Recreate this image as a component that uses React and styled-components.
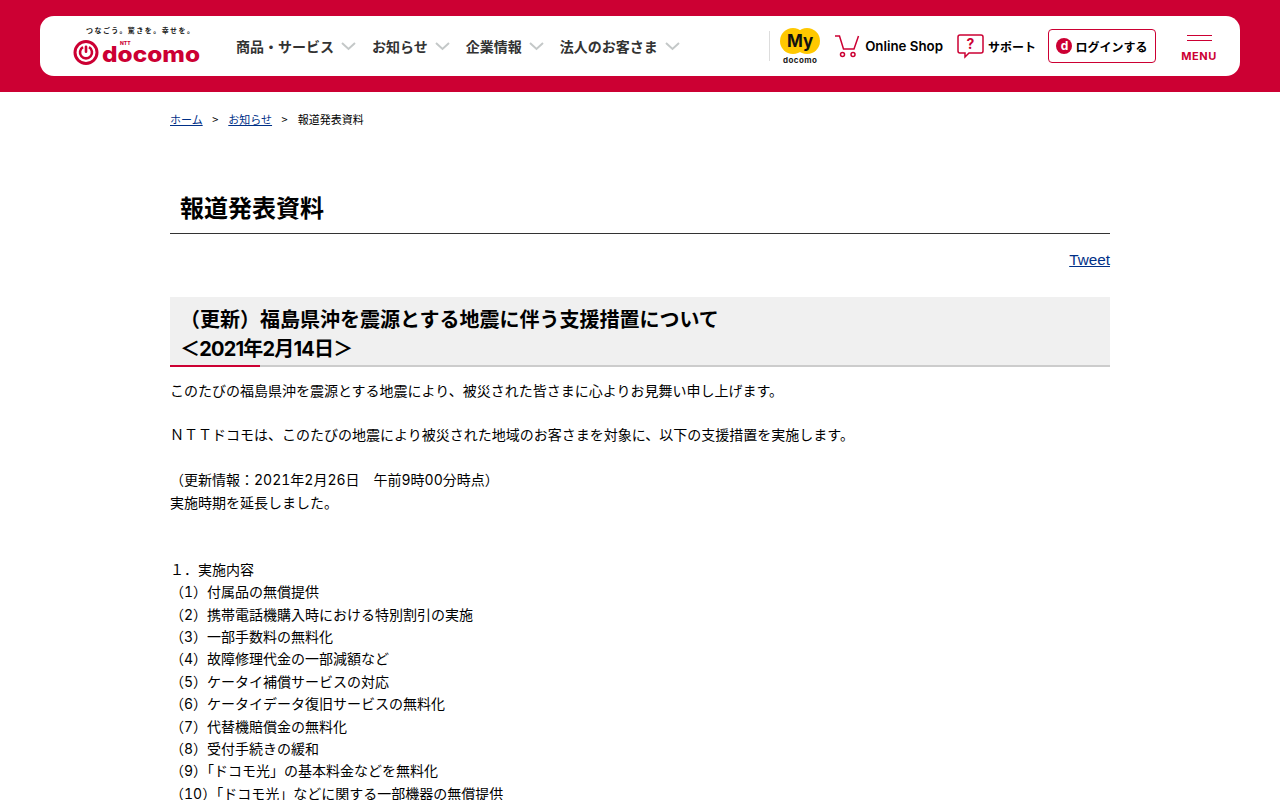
import React from "react";
import styled, { createGlobalStyle } from "styled-components";

const Global = createGlobalStyle`
  html, body { margin: 0; padding: 0; background: #fff; }
  body { font-family: "Noto Sans CJK JP", "Noto Sans", sans-serif; color: #000; overflow: hidden; height: 800px; }
`;
const Header = styled.header`
  background: #cc0033; height: 92px; padding: 16px 40px; box-sizing: border-box;
`;
const Bar = styled.div`
  background: #fff; border-radius: 14px; height: 60px; display: flex; align-items: center; position: relative;
`;
const LogoWrap = styled.a`
  display: flex; flex-direction: column; align-items: flex-start; width: 128px; margin: 0 0 1.500px 33px; flex: none;
`;
const Tagline = styled.span`
  font-size: 7px; font-weight: 700; letter-spacing: 1.450px; line-height: 9px; color: #222; white-space: nowrap; margin: 0 0 5.500px 13px;
`;
const Nav = styled.nav`
  display: flex; margin-left: 35px; gap: 16px; align-items: center;
`;
const NavItem = styled.a`
  display: flex; align-items: center; gap: 7px; font-size: 14px; font-weight: 700; color: #333; white-space: nowrap;
`;
const Right = styled.div`
  margin-left: auto; display: flex; align-items: center;
`;
const Divider = styled.span`
  width: 1px; height: 30px; background: #ddd; margin-right: 10px;
`;
const MyWrap = styled.a`
  display: flex; flex-direction: column; align-items: center; width: 40px; margin-right: 14px;
`;
const MyCaption = styled.span`
  font-size: 8px; font-weight: 700; line-height: 9px; color: #222; margin-top: 2px; letter-spacing: 0.4px; font-family: "Inter", sans-serif;
`;
const IconLink = styled.a`
  display: flex; align-items: center; gap: ${p => p.$gap}px; font-size: ${p => p.$size}px; font-weight: ${p => p.$weight}; color: #000; white-space: nowrap; margin-right: ${p => p.$mr}px;
  font-family: "Inter", "Noto Sans CJK JP", sans-serif;
`;
const Login = styled.a`
  display: flex; align-items: center; justify-content: center; gap: 3px; width: 108px; height: 34px; box-sizing: border-box;
  border: 1px solid #cc0033; border-radius: 4px; font-size: 12px; font-weight: 700; color: #000; white-space: nowrap;
`;
const DMark = styled.span`
  width: 16px; height: 16px; border-radius: 50%; background: #cc0033; color: #fff; font: 700 12px/15px "Inter", sans-serif; text-align: center; flex: none;
`;
const Menu = styled.a`
  width: 36px; margin: 4px 23px 0 25px; display: flex; flex-direction: column; align-items: center;
`;
const MenuLine = styled.span`
  width: 25px; height: 1px; background: #cc0033; margin-bottom: 4px;
`;
const MenuLabel = styled.span`
  font: 700 11px/12px "Inter", sans-serif; letter-spacing: 0.5px; color: #cc0033; margin-top: 5px;
`;
const Main = styled.main`
  width: 940px; margin: 0 auto;
`;
const Crumbs = styled.ol`
  list-style: none; margin: 0; padding: 19px 0 0; height: 16px; display: flex; align-items: center; font-size: 11px; line-height: 16px; color: #000;
`;
const Crumb = styled.li`
  display: flex; align-items: center; white-space: nowrap;
  & + &::before { content: ">"; margin: 0 10px 0 9.500px; font-size: 11px; }
`;
const TextLink = styled.a`
  color: #003087; text-decoration: underline;
`;
const Title = styled.h1`
  margin: 62px 0 0; padding: 0 0 8px 10px; font-size: 24px; line-height: 36px; font-weight: 700; border-bottom: 1px solid #333;
`;
const TweetRow = styled.div`
  display: flex; justify-content: flex-end; margin-top: 14px; font: 15.300px/24px "Liberation Sans", sans-serif;
`;
const SectionHead = styled.h2`
  position: relative; margin: 25px 0 0; padding: 7px 10px 3px; height: 70px; box-sizing: border-box; background: #f0f0f0; border-bottom: 2px solid #ccc;
  font-size: 20px; line-height: 29px; font-weight: 700;
  &::after { content: ""; position: absolute; left: 0; bottom: -2px; width: 90px; height: 2px; background: #cc0033; }
`;
const DateLine = styled.span`
  font-family: "Inter", "Noto Sans CJK JP", sans-serif; letter-spacing: -0.800px;
`;
const Body = styled.p`
  margin: 12.500px 0 0; font-family: "Inter", "Noto Sans CJK JP", sans-serif; font-variant-numeric: tabular-nums; font-size: 14px; line-height: 22.4px;
`;

const Chevron = () => (
  <svg width="15" height="9" viewBox="0 0 15 9" fill="none" stroke="#c4c8c8" strokeWidth="2"><path d="M1 1l6.500 6L14 1" /></svg>
);
const Logo = () => (
  <svg width="128" height="25" viewBox="0 0 128 25">
    <circle cx="13" cy="12.500" r="11" fill="none" stroke="#cc0033" strokeWidth="3" />
    <path d="M10 7.200a6 6 0 1 0 6 0" fill="none" stroke="#cc0033" strokeWidth="2.600" />
    <rect x="11.700" y="5.500" width="2.600" height="7.500" rx="1.300" fill="#cc0033" />
    <text x="29" y="22" fontFamily="Inter, sans-serif" fontWeight="800" fontSize="22" fill="#cc0033" textLength="98" lengthAdjust="spacingAndGlyphs">docomo</text>
    <text x="47" y="5" fontFamily="Inter, sans-serif" fontWeight="800" fontSize="5" fill="#cc0033">NTT</text>
  </svg>
);
const MyBadge = () => (
  <svg width="40" height="26" viewBox="0 0 40 26">
    <circle cx="13" cy="13" r="13" fill="#ffc800" />
    <circle cx="27" cy="13" r="13" fill="#ffc800" />
    <text x="20" y="19" textAnchor="middle" fontFamily="Inter, sans-serif" fontWeight="700" fontSize="17" fill="#111">My</text>
  </svg>
);
const Cart = () => (
  <svg width="26" height="24" viewBox="0 0 26 24" fill="none" stroke="#cc0033" strokeWidth="1.500">
    <path d="M1 2h4.500l4 13h10.500L24.500 2" />
    <circle cx="8.500" cy="20.500" r="2" /><circle cx="19" cy="20.500" r="2" />
  </svg>
);
const Help = () => (
  <svg width="27" height="25" viewBox="0 0 27 25" fill="none">
    <path d="M3 1h21a2 2 0 0 1 2 2v14a2 2 0 0 1-2 2H12l-4 4v-4H3a2 2 0 0 1-2-2V3a2 2 0 0 1 2-2z" stroke="#cc0033" strokeWidth="1.500" />
    <text x="13.500" y="15" textAnchor="middle" fontFamily="Inter, sans-serif" fontWeight="700" fontSize="14" fill="#cc0033">?</text>
  </svg>
);

const lines = [
  "このたびの福島県沖を震源とする地震により、被災された皆さまに心よりお見舞い申し上げます。", "",
  "ＮＴＴドコモは、このたびの地震により被災された地域のお客さまを対象に、以下の支援措置を実施します。", "",
  "（更新情報：2021年2月26日　午前9時00分時点）",
  "実施時期を延長しました。", "", "",
  "１．実施内容",
  "（1）付属品の無償提供",
  "（2）携帯電話機購入時における特別割引の実施",
  "（3）一部手数料の無料化",
  "（4）故障修理代金の一部減額など",
  "（5）ケータイ補償サービスの対応",
  "（6）ケータイデータ復旧サービスの無料化",
  "（7）代替機賠償金の無料化",
  "（8）受付手続きの緩和",
  "（9）「ドコモ光」の基本料金などを無料化",
  "（10）「ドコモ光」などに関する一部機器の無償提供",
];

export default function App() {
  return (
    <>
      <Global />
      <Header>
        <Bar>
          <LogoWrap>
            <Tagline>つなごう。驚きを。幸せを。</Tagline>
            <Logo />
          </LogoWrap>
          <Nav>
            {["商品・サービス", "お知らせ", "企業情報", "法人のお客さま"].map(t => (
              <NavItem key={t}>{t}<Chevron /></NavItem>
            ))}
          </Nav>
          <Right>
            <Divider />
            <MyWrap><MyBadge /><MyCaption>docomo</MyCaption></MyWrap>
            <IconLink $gap={5} $size={13.3} $weight={600} $mr={14}><Cart />Online Shop</IconLink>
            <IconLink $gap={4} $size={12} $weight={700} $mr={12}><Help />サポート</IconLink>
            <Login><DMark>d</DMark>ログインする</Login>
            <Menu>
              <MenuLine /><MenuLine /><MenuLabel>MENU</MenuLabel>
            </Menu>
          </Right>
        </Bar>
      </Header>
      <Main>
        <Crumbs>
          <Crumb><TextLink href="#">ホーム</TextLink></Crumb>
          <Crumb><TextLink href="#">お知らせ</TextLink></Crumb>
          <Crumb>報道発表資料</Crumb>
        </Crumbs>
        <Title>報道発表資料</Title>
        <TweetRow><TextLink href="#">Tweet</TextLink></TweetRow>
        <SectionHead>（更新）福島県沖を震源とする地震に伴う支援措置について<br /><DateLine>＜2021年2月14日＞</DateLine></SectionHead>
        <Body>
          {lines.map((l, i) => <React.Fragment key={i}>{l}<br /></React.Fragment>)}
        </Body>
      </Main>
    </>
  );
}
